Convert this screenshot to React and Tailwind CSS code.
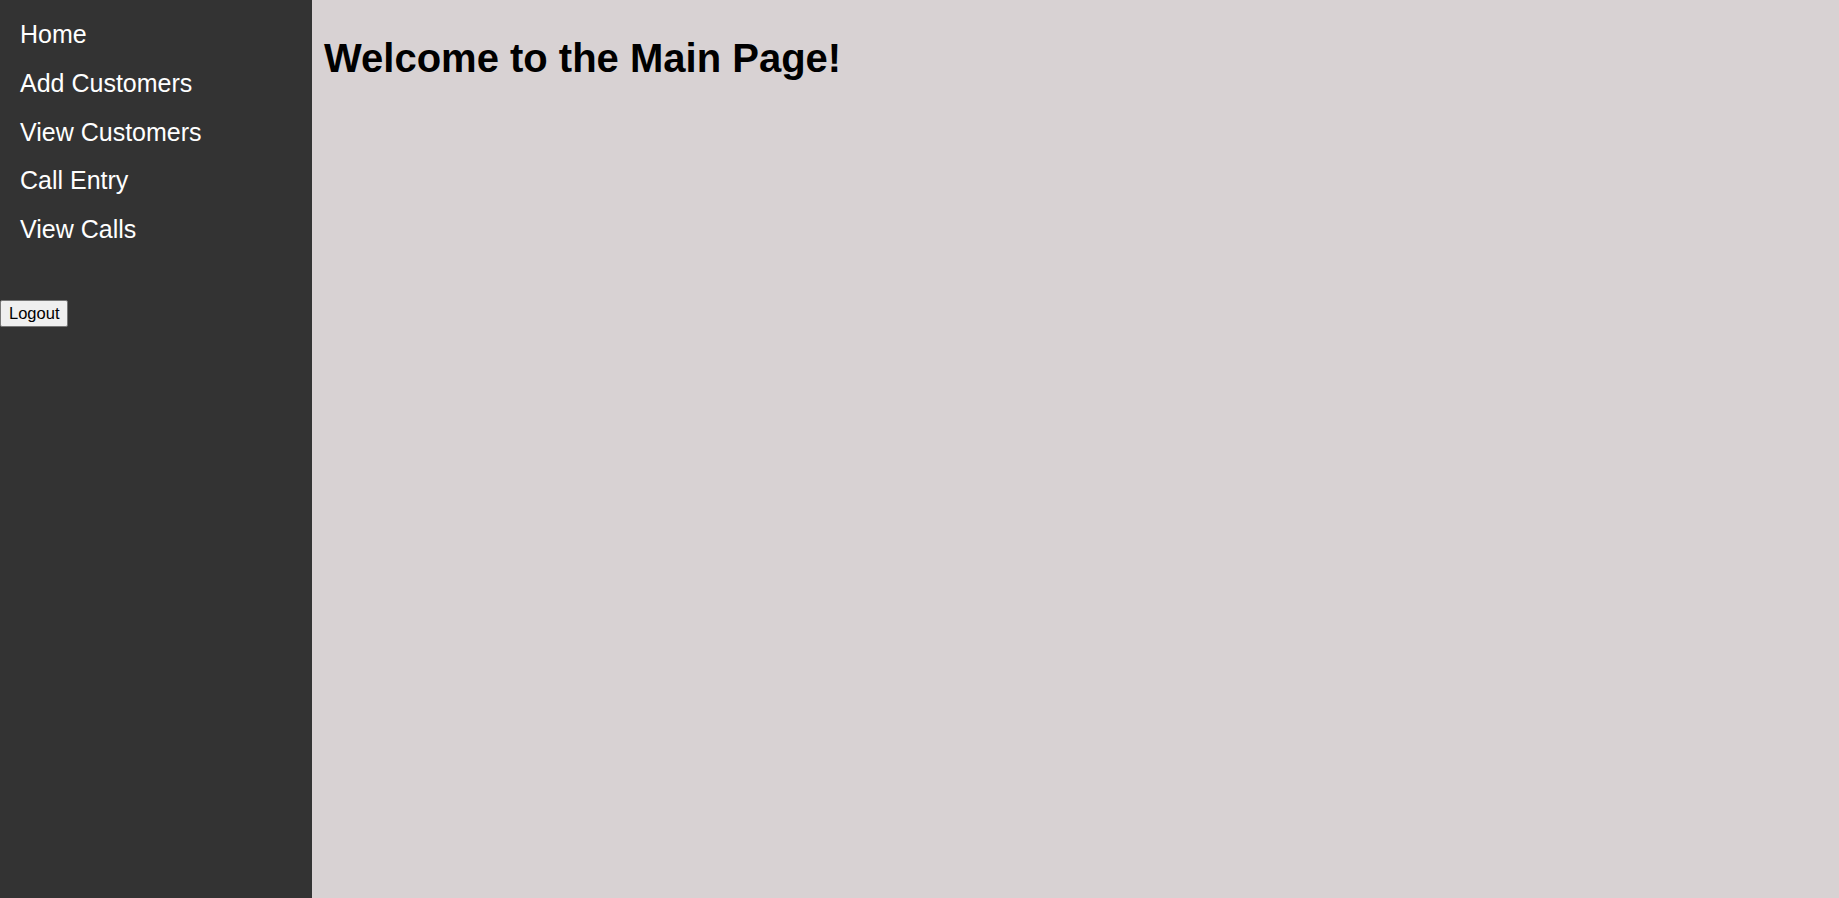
export default function App() {
  const links = ["Home", "Add Customers", "View Customers", "Call Entry", "View Calls"];
  return (
    <div className="flex h-[898px] w-full" style={{ fontFamily: '"Liberation Sans", Arial, sans-serif' }}>
      <aside className="w-[312px] shrink-0 bg-[#333333] pt-[10px]">
        <nav className="flex flex-col">
          {links.map((l) => (
            <a key={l} href="#" className="block px-[20px] py-[10px] text-[25px] leading-[28.75px] text-white">
              {l}
            </a>
          ))}
        </nav>
        <button className="mt-[46px] h-[27px] rounded-[2px] border border-[#767676] bg-[#efefef] px-[8px] text-[16.5px] leading-none text-black">
          Logout
        </button>
      </aside>
      <main className="flex-1 bg-[#d8d2d3] pl-[12px] pr-[10px]">
        <h1 className="mt-[35px] text-[40px] font-bold leading-[46px] text-black">Welcome to the Main Page!</h1>
      </main>
    </div>
  );
}
